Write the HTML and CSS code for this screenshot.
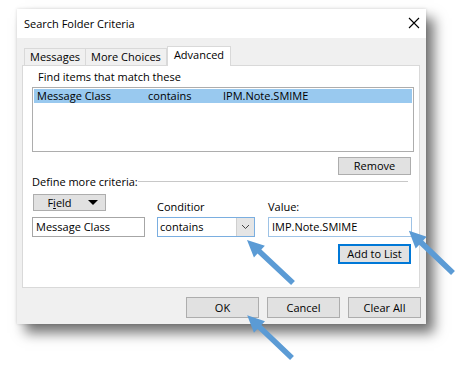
FILE: index.html
```html
<!DOCTYPE html>
<html lang="en">
<head>
    <meta charset="UTF-8">
    <title>Search Folder Criteria</title>
    <link rel="stylesheet" href="styles.css">
</head>
<body>
    <div class="page">
        <div class="dialog">
            <div class="titlebar">
                <span>Search Folder Criteria</span>
                <svg class="close" width="12" height="12" viewBox="0 0 12 12">
                    <path d="M1 1 L11 11 M11 1 L1 11" stroke="#000" stroke-width="1.1"/>
                </svg>
            </div>
            <div class="content">
                <div class="tabs">
                    <div class="tab">Messages</div>
                    <div class="tab">More Choices</div>
                    <div class="tab active">Advanced</div>
                </div>
                <div class="panel">
                    <div class="find-label">Find items that match these</div>
                    <div class="listbox">
                        <div class="list-row selected">
                            <span class="col-field">Message Class</span>
                            <span class="col-cond">contains</span>
                            <span>IPM.Note.SMIME</span>
                        </div>
                    </div>
                    <div class="right-row">
                        <button class="btn">Remove</button>
                    </div>
                    <div class="group-title">
                        <span>Define more criteria:</span>
                        <div class="group-line"></div>
                    </div>
                    <div class="criteria">
                        <button class="btn field-btn"><span>F<u>i</u>eld</span> <span class="tri"></span></button>
                        <div class="crit-label">Conditior</div>
                        <div class="crit-label">Value:</div>
                        <div class="textbox">Message Class</div>
                        <div class="textbox combo">
                            <span>contains</span>
                            <span class="combo-btn">
                                <svg width="9" height="6" viewBox="0 0 9 6"><path d="M1 1 L4.5 4.5 L8 1" stroke="#444" fill="none" stroke-width="1"/></svg>
                            </span>
                        </div>
                        <div class="textbox focus">IMP.Note.SMIME</div>
                    </div>
                    <div class="right-row">
                        <button class="btn default">Add to List</button>
                    </div>
                </div>
                <div class="footer">
                    <button class="btn wide">OK</button>
                    <button class="btn wide">Cancel</button>
                    <button class="btn wide">Clear All</button>
                </div>
            </div>
        </div>
    </div>

    <svg class="arrows" width="475" height="367" viewBox="0 0 475 367">
        <path transform="translate(293 283) rotate(223.1)" d="M0 -2.8 L46 -2.8 L46 -8 L63 0 L46 8 L46 2.8 L0 2.8 Z" fill="#5b9bd5"/>
        <path transform="translate(453 273) rotate(223.7)" d="M0 -2.8 L44 -2.8 L44 -8 L61 0 L44 8 L44 2.8 L0 2.8 Z" fill="#5b9bd5"/>
        <path transform="translate(292 358) rotate(223.7)" d="M0 -2.8 L45 -2.8 L45 -8 L62 0 L45 8 L45 2.8 L0 2.8 Z" fill="#5b9bd5"/>
    </svg>
</body>
</html>
```

FILE: styles.css
```css
body {
    margin: 0;
    background: #fff;
    font-family: "Open Sans", "Noto Sans", sans-serif;
    font-size: 11px;
    color: #000;
    position: relative;
    width: 475px;
    height: 367px;
    overflow: hidden;
}
.page {
    padding: 9px 0 0 17px;
}
.dialog {
    width: 409px;
    height: 315px;
    background: #f0f0f0;
    box-shadow: 8px 9px 12px rgba(0,0,0,0.55), 0 0 3px rgba(0,0,0,0.15);
    display: flex;
    flex-direction: column;
}
.titlebar {
    height: 29px;
    background: #fff;
    display: flex;
    align-items: center;
    justify-content: space-between;
    padding: 0 6px 0 7px;
    font-size: 11px;
}
.close {
    margin-top: -2px;
}
.content {
    padding: 8px 6px 0 5px;
}
.tabs {
    display: flex;
    align-items: flex-end;
    padding-left: 2px;
    height: 19px;
}
.tab {
    height: 16px;
    line-height: 16px;
    padding: 0 5px;
    border: 1px solid #d9d9d9;
    border-bottom: none;
    background: #f0f0f0;
}
.tab + .tab {
    border-left: none;
}
.tab.active {
    height: 19px;
    line-height: 16px;
    background: #fff;
    border-left: 1px solid #d9d9d9;
    padding: 0 6px;
    margin-bottom: -1px;
    position: relative;
}
.panel {
    height: 221px;
    background: #fff;
    border: 1px solid #d9d9d9;
    padding: 0 5px 0 9px;
}
.find-label {
    padding: 3px 0 0 6px;
    height: 18px;
    line-height: 16px;
}
.listbox {
    height: 61px;
    border: 1px solid #adadad;
    padding: 1px;
}
.list-row {
    height: 14px;
    line-height: 14px;
    padding-left: 3px;
    display: flex;
}
.list-row.selected {
    background: #99c9ef;
}
.col-field {
    width: 111px;
}
.col-cond {
    width: 75px;
}
.right-row {
    display: flex;
    justify-content: flex-end;
    padding-right: 3px;
}
.btn {
    font-family: inherit;
    font-size: 11px;
    background: #e1e1e1;
    border: 1px solid #adadad;
    color: #000;
    width: 73px;
    height: 18px;
    padding: 0;
    line-height: 14px;
}
.listbox + .right-row .btn {
    margin-top: 5px;
}
.group-title {
    display: flex;
    align-items: center;
    height: 12px;
    padding-right: 6px;
}
.group-line {
    flex: 1;
    border-top: 1px solid #c8c8c8;
}
.criteria {
    display: grid;
    grid-template-columns: 113px 98px 145px;
    grid-template-rows: 23px 20px;
    column-gap: 12px;
    margin-top: 7px;
}
.field-btn {
    width: 73px;
    height: 17px;
    margin-left: 1px;
    display: flex;
    align-items: center;
    justify-content: center;
    gap: 16px;
    padding-left: 6px;
}
.tri {
    width: 0;
    height: 0;
    border-left: 5px solid transparent;
    border-right: 5px solid transparent;
    border-top: 5px solid #000;
}
.crit-label {
    align-self: end;
    padding-bottom: 3px;
}
.crit-label + .crit-label {
    margin-left: 1px;
}
.textbox {
    height: 20px;
    box-sizing: border-box;
    border: 1px solid #a6a6a6;
    padding-left: 3px;
    line-height: 18px;
    display: flex;
}
.combo {
    border-color: #7aaee0;
    justify-content: space-between;
    padding-left: 2px;
}
.combo-btn {
    width: 17px;
    background: #e5e5e5;
    border-left: 1px solid #cfcfcf;
    display: flex;
    align-items: center;
    justify-content: center;
}
.focus {
    border-color: #9ec3e6;
    margin-left: 1px;
}
.criteria + .right-row .btn {
    margin-top: 7px;
    height: 20px;
}
.btn.default {
    border: 2px solid #0078d7;
}
.footer {
    display: flex;
    justify-content: flex-end;
    gap: 8px;
    margin-top: 9px;
    margin-right: -1px;
}
.wide {
    width: 73px;
    height: 21px;
}
.arrows {
    position: absolute;
    top: 0;
    left: 0;
}
```
